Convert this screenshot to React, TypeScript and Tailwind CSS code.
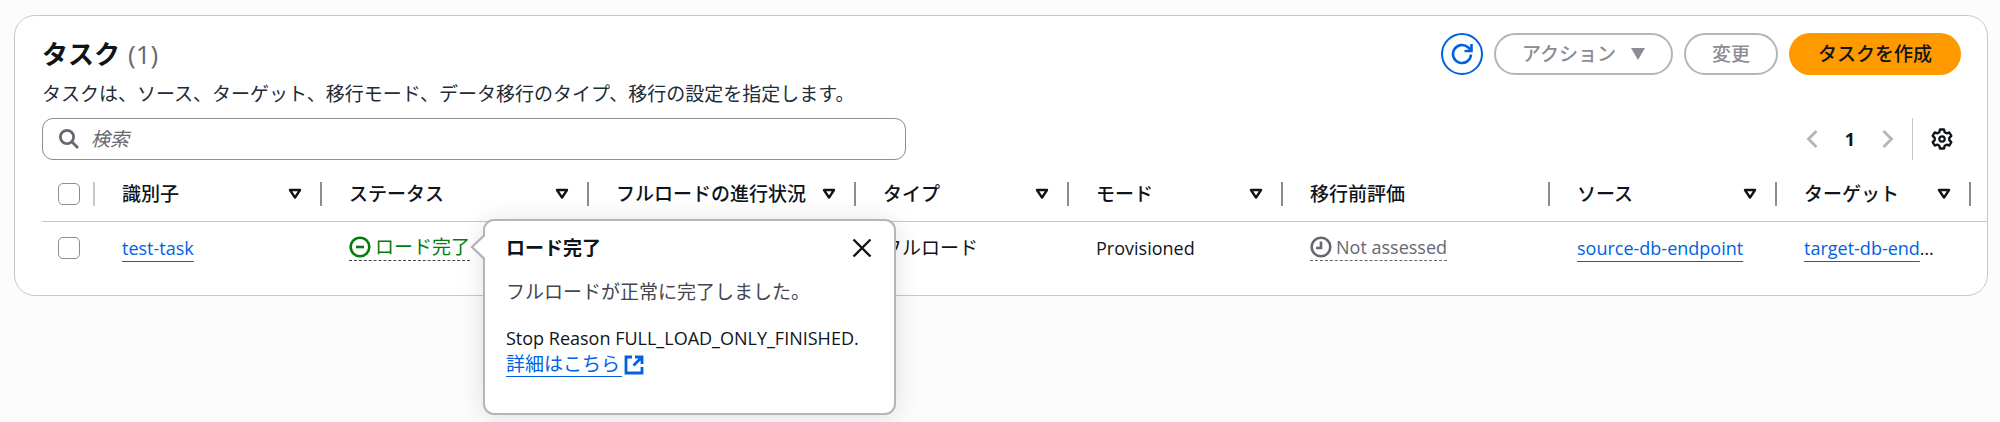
import React from 'react'

type HeaderColumn = {
    label: string
    width: string
    sortable: boolean
}

const columns: HeaderColumn[] = [
    { label: '識別子', width: 'w-[227px]', sortable: true },
    { label: 'ステータス', width: 'w-[267px]', sortable: true },
    { label: 'フルロードの進行状況', width: 'w-[267px]', sortable: true },
    { label: 'タイプ', width: 'w-[213px]', sortable: true },
    { label: 'モード', width: 'w-[214px]', sortable: true },
    { label: '移行前評価', width: 'w-[267px]', sortable: false },
    { label: 'ソース', width: 'w-[227px]', sortable: true },
    { label: 'ターゲット', width: 'w-[194px]', sortable: true },
]

const linkClass = 'text-[#0062e3] underline decoration-1 underline-offset-[6px]'
const checkboxClass = 'block w-[22px] h-[22px] appearance-none rounded-[5px] border border-[#8c8c94] bg-white checked:bg-[#0062e3]'
const pillClass = 'h-[42px] rounded-full border-2 border-[#b4b4bb] text-[19px] font-medium text-[#8c8c94] flex items-center justify-center'

function SortIcon() {
    return (
        <svg width="14" height="12" viewBox="0 0 14 12" fill="none" stroke="#0f141a" strokeWidth="2.4" strokeLinejoin="round" aria-hidden="true">
            <path d="M2 2h10L7 9.6z" />
        </svg>
    )
}

function RefreshIcon() {
    return (
        <svg width="22" height="22" viewBox="0 0 22 22" fill="none" stroke="#0062e3" strokeWidth="2.6" aria-hidden="true">
            <path d="M20 11.500a9 9 0 1 1-3-7.200L20 7" />
            <path d="M20.500 1v7h-7" />
        </svg>
    )
}

function SearchIcon() {
    return (
        <svg width="20" height="20" viewBox="0 0 20 20" fill="none" stroke="#656871" strokeWidth="2.8" aria-hidden="true">
            <circle cx="8" cy="8" r="6.6" />
            <path d="M12.600 12.600l6.400 6.400" />
        </svg>
    )
}

function GearIcon() {
    return (
        <svg width="22" height="22" viewBox="0 0 22 22" fill="none" stroke="#0f141a" strokeWidth="2.4" strokeLinejoin="round" aria-hidden="true">
            <path d="M9 1.500h4l.7 2.700 1.900 1.100 2.700-.8 2 3.400-2 2v2.200l2 2-2 3.400-2.700-.8-1.900 1.100-.7 2.700H9l-.7-2.700-1.900-1.100-2.700.8-2-3.400 2-2V9.900l-2-2 2-3.400 2.700.8 1.900-1.100z" />
            <circle cx="11" cy="11" r="2.700" strokeWidth="2.200" />
        </svg>
    )
}

function ChevronIcon({ direction }: { direction: 'left' | 'right' }) {
    return (
        <svg width="12" height="20" viewBox="0 0 12 20" fill="none" stroke="#b4b4bb" strokeWidth="2.8" aria-hidden="true">
            <path d={direction === 'left' ? 'M10.500 2L2.500 10l8 8' : 'M1.500 2l8 8-8 8'} />
        </svg>
    )
}

function StoppedIcon() {
    return (
        <svg width="22" height="22" viewBox="0 0 22 22" fill="none" stroke="#007d0a" strokeWidth="2.6" aria-hidden="true">
            <circle cx="11" cy="11" r="9.300" />
            <path d="M7 11h8" />
        </svg>
    )
}

function ClockIcon() {
    return (
        <svg width="22" height="22" viewBox="0 0 22 22" fill="none" stroke="#656871" strokeWidth="2.6" aria-hidden="true">
            <circle cx="11" cy="11" r="9.300" />
            <path d="M11 5.500V12H6" />
        </svg>
    )
}

function ExternalIcon() {
    return (
        <svg width="20" height="20" viewBox="0 0 20 20" fill="none" stroke="#0062e3" strokeWidth="2.8" aria-hidden="true">
            <path d="M8 2H2v16h16v-6" />
            <path d="M11 2h7v7M18 2l-8.500 8.500" />
        </svg>
    )
}

function StatusPopover({ onClose }: { onClose: () => void }) {
    return (
        <div role="dialog" aria-labelledby="popover-title" className="absolute left-[134px] -top-[15px] z-10 w-[413px] h-[196px] rounded-[11px] border-2 border-[#b4b4bb] bg-white pl-[21px] pr-5 pt-[14px] text-[#0f141a] shadow-[0_2px_26px_rgba(0,7,22,0.12)]">
            <svg className="absolute -left-[15px] top-[13px]" width="16" height="26" viewBox="0 0 16 26" aria-hidden="true">
                <path d="M16 1L14 1.500 2 13l12 11.500 2 .5z" fill="#fff" />
                <path d="M14 .5v1L2 13l12 11.500v1" fill="none" stroke="#b4b4bb" strokeWidth="2.4" />
            </svg>
            <div className="flex items-center justify-between">
                <h3 id="popover-title" className="text-[19px] font-bold leading-[26px]">ロード完了</h3>
                <button type="button" aria-label="閉じる" onClick={onClose} className="pr-0.5">
                    <svg width="20" height="20" viewBox="0 0 20 20" stroke="#0f141a" strokeWidth="2.4" aria-hidden="true">
                        <path d="M1.500 1.500l17 17M18.500 1.500l-17 17" />
                    </svg>
                </button>
            </div>
            <p className="mt-[18px] text-[19px] leading-[26px] text-[#424650]">フルロードが正常に完了しました。</p>
            <p className="mt-5 leading-[26px] whitespace-nowrap">Stop Reason FULL_LOAD_ONLY_FINISHED.</p>
            <a href="#details" className="inline-flex items-center text-[19px] leading-6 text-[#0062e3]">
                <span className="border-b border-[#0062e3] pr-0.5">詳細はこちら</span>
                <span className="ml-0.5"><ExternalIcon /></span>
            </a>
        </div>
    )
}

function App() {
    const [search, setSearch] = React.useState('')
    const [openPopover, setOpenPopover] = React.useState(true)

    return (
        <main className="min-h-screen bg-[#fcfcfd] pl-[14px] pr-3 pt-[15px] font-['Open_Sans','Noto_Sans_CJK_JP',sans-serif] text-[18px] leading-[26px] text-[#0f141a]" lang="ja">
            <section className="rounded-[21px] border border-[#c6c6cd] bg-white pt-[17px] pb-[21px] pl-[27px]">
                <div className="pr-[26px]">
                    <div className="flex items-center justify-between">
                        <h2 className="flex items-center gap-2 text-[26px] font-bold leading-[42px]">
                            タスク
                            <span className="font-normal text-[#656871]">(1)</span>
                        </h2>
                        <div className="flex items-center gap-[11px]">
                            <button type="button" aria-label="更新" className="flex h-[42px] w-[42px] items-center justify-center rounded-full border-2 border-[#0062e3]">
                                <RefreshIcon />
                            </button>
                            <button type="button" className={`${pillClass} gap-[15px] px-[26px]`}>
                                アクション
                                <svg width="14" height="12" viewBox="0 0 14 12" fill="#8c8c94" aria-hidden="true">
                                    <path d="M0 0h14L7 12z" />
                                </svg>
                            </button>
                            <button type="button" className={`${pillClass} px-[26px]`}>変更</button>
                            <button type="button" className="h-[42px] rounded-full bg-[#ff9900] px-[29px] text-[19px] font-medium">タスクを作成</button>
                        </div>
                    </div>
                    <p className="mt-[5px] text-[19px] leading-7 text-[#232b37]">
                        タスクは、ソース、ターゲット、移行モード、データ移行のタイプ、移行の設定を指定します。
                    </p>
                    <div className="mt-[10px] flex items-center justify-between">
                        <label className="flex h-[42px] w-[45%] items-center gap-3 rounded-[11px] border border-[#8c8c94] px-4">
                            <SearchIcon />
                            <input
                                type="text"
                                aria-label="検索"
                                placeholder="検索"
                                value={search}
                                onChange={(e) => setSearch(e.target.value)}
                                className="min-w-0 flex-1 text-[19px] outline-none placeholder:italic placeholder:text-[#656871]"
                            />
                        </label>
                        <div className="flex items-center">
                            <nav aria-label="ページ" className="flex items-center">
                                <button type="button" aria-label="前へ"><ChevronIcon direction="left" /></button>
                                <button type="button" className="w-[64px] text-center font-bold">1</button>
                                <button type="button" aria-label="次へ"><ChevronIcon direction="right" /></button>
                            </nav>
                            <button type="button" aria-label="設定" className="ml-[18px] flex h-[42px] items-center border-l border-[#c6c6cd] pl-[18px] pr-2">
                                <GearIcon />
                            </button>
                        </div>
                    </div>
                </div>

                <table className="mt-2 w-full table-fixed border-collapse text-left">
                    <thead>
                        <tr className="h-[53px] border-b border-[#c6c6cd]">
                            <th className="w-[53px] p-0">
                                <div className="flex items-center justify-between pl-4">
                                    <input type="checkbox" aria-label="すべて選択" className={checkboxClass} />
                                    <span className="h-6 w-0.5 bg-[#c6c6cd]" />
                                </div>
                            </th>
                            {columns.map((item) => (
                                <th key={item.label} scope="col" className={`${item.width} p-0 text-[19px] font-medium text-[#0f141a]`}>
                                    <div className="flex items-center pl-[27px]">
                                        <span className="flex-1 whitespace-nowrap">{item.label}</span>
                                        {item.sortable && (
                                            <button type="button" aria-label={`${item.label}で並べ替え`}><SortIcon /></button>
                                        )}
                                        <span className="ml-[18px] h-6 w-0.5 bg-[#8c8c94]" />
                                    </div>
                                </th>
                            ))}
                            <th className="p-0" />
                        </tr>
                    </thead>
                    <tbody>
                        <tr className="h-[53px]">
                            <td className="p-0 pl-4">
                                <input type="checkbox" aria-label="test-task を選択" className={checkboxClass} />
                            </td>
                            <td className="p-0 pl-[27px]">
                                <a href="#test-task" className={linkClass}>test-task</a>
                            </td>
                            <td className="p-0 pl-[27px]">
                                <div className="relative flex">
                                    <button type="button" onClick={() => setOpenPopover(!openPopover)} className="flex items-center gap-1 border-b border-dashed border-[#424650] text-[19px] text-[#007d0a]">
                                        <StoppedIcon />
                                        ロード完了
                                    </button>
                                    {openPopover && <StatusPopover onClose={() => setOpenPopover(false)} />}
                                </div>
                            </td>
                            <td className="p-0" />
                            <td className="p-0 pl-[27px] text-[19px]">フルロード</td>
                            <td className="p-0 pl-[27px]">Provisioned</td>
                            <td className="p-0 pl-[27px]">
                                <button type="button" className="flex items-center gap-1 border-b border-dashed border-[#656871] text-[#656871]">
                                    <ClockIcon />
                                    Not assessed
                                </button>
                            </td>
                            <td className="p-0 pl-[27px]">
                                <a href="#source" className={linkClass}>source-db-endpoint</a>
                            </td>
                            <td className="whitespace-nowrap p-0 pl-[27px]">
                                <a href="#target" className={linkClass}>target-db-end</a>…
                            </td>
                            <td className="p-0" />
                        </tr>
                    </tbody>
                </table>
            </section>
        </main>
    )
}

export default App
